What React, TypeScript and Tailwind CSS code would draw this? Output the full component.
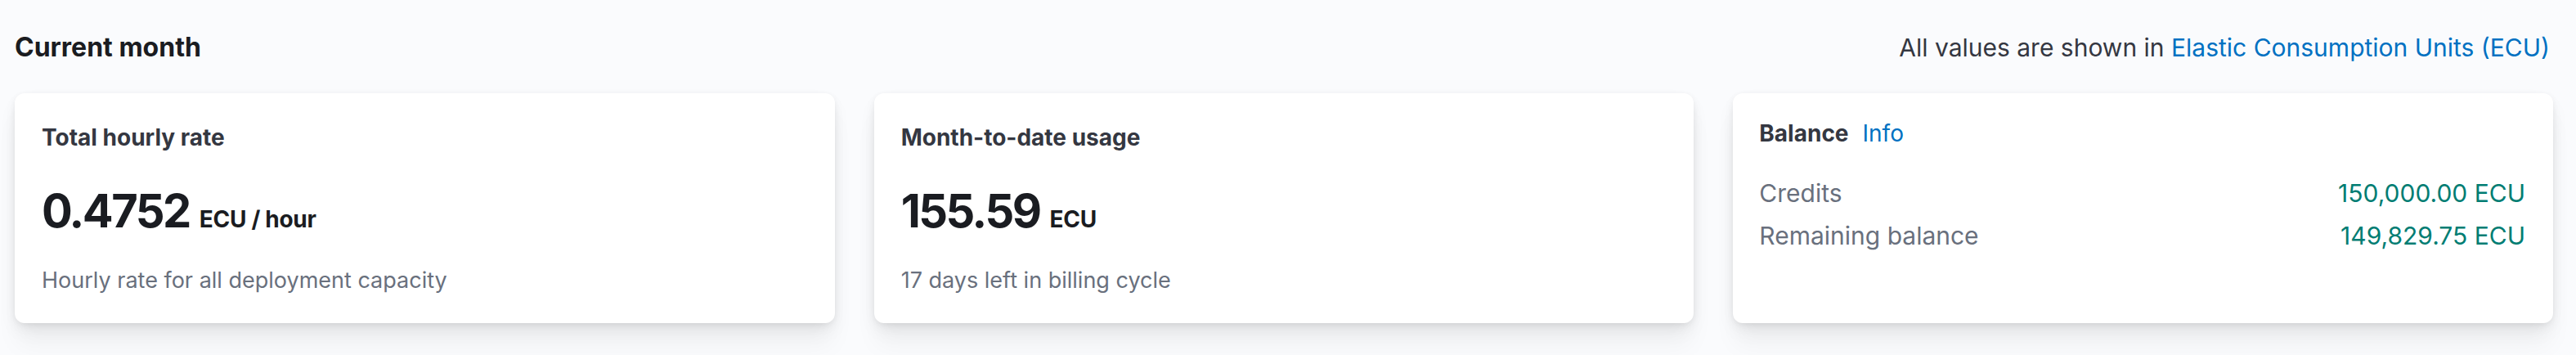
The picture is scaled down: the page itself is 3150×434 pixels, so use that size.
import React from "react";

const cardCls =
  "bg-white rounded-[12px] h-[281px] px-[33px] shadow-[0_2px_8px_-2px_rgba(0,0,0,0.08),0_5px_16px_-2px_rgba(0,0,0,0.06),0_11px_24px_-2px_rgba(0,0,0,0.05),0_30px_30px_-2px_rgba(0,0,0,0.04)]";

function StatCard({
  title,
  value,
  unit,
  description,
}: {
  title: string;
  value: string;
  unit: string;
  description: string;
}) {
  return (
    <div className={`${cardCls} pt-[34px] flex flex-col`}>
      <div className="text-[28px] leading-[40px] font-bold text-[#343741]">{title}</div>
      <div className="mt-[36px] h-[68px] flex items-baseline text-[#1a1c21]">
        <span className="text-[56px] leading-[68px] font-bold tracking-[-2.5px]">{value}</span>
        <span className="ml-[12px] text-[28px] leading-none font-bold tracking-[-0.3px]">{unit}</span>
      </div>
      <div className="mt-[31px] text-[27px] leading-[40px] text-[#69707d]">{description}</div>
    </div>
  );
}

export default function App() {
  return (
    <div className="w-full h-[434px] bg-[#fafbfd] pl-[18px] pr-[28px] font-['Inter',sans-serif] overflow-hidden">
      <div className="pt-[38px] flex items-baseline justify-between">
        <h2 className="text-[32px] leading-[40px] font-bold text-[#1a1c21]">Current month</h2>
        <p className="text-[30px] leading-[40px] text-[#343741] pr-[4px]">
          All values are shown in{" "}
          <a className="text-[#0071c2]" href="#">
            Elastic Consumption Units (ECU)
          </a>
        </p>
      </div>
      <div className="mt-[36px] grid grid-cols-3 gap-[48px]">
        <StatCard
          title="Total hourly rate"
          value="0.4752"
          unit="ECU / hour"
          description="Hourly rate for all deployment capacity"
        />
        <StatCard
          title="Month-to-date usage"
          value="155.59"
          unit="ECU"
          description="17 days left in billing cycle"
        />
        <div className={`${cardCls} pt-[29px] pr-[34px] pl-[32px]`}>
          <div className="flex items-baseline gap-[17px] leading-[40px] text-[28px]">
            <span className="font-bold text-[#343741]">Balance</span>
            <a className="text-[#0071c2]" href="#">
              Info
            </a>
          </div>
          <div className="mt-[29px] flex flex-col gap-[4px] text-[30px] leading-[48px]">
            <div className="flex justify-between">
              <span className="text-[#69707d]">Credits</span>
              <span className="text-[#017d73]">150,000.00 ECU</span>
            </div>
            <div className="flex justify-between">
              <span className="text-[#69707d]">Remaining balance</span>
              <span className="text-[#017d73]">149,829.75 ECU</span>
            </div>
          </div>
        </div>
      </div>
    </div>
  );
}
